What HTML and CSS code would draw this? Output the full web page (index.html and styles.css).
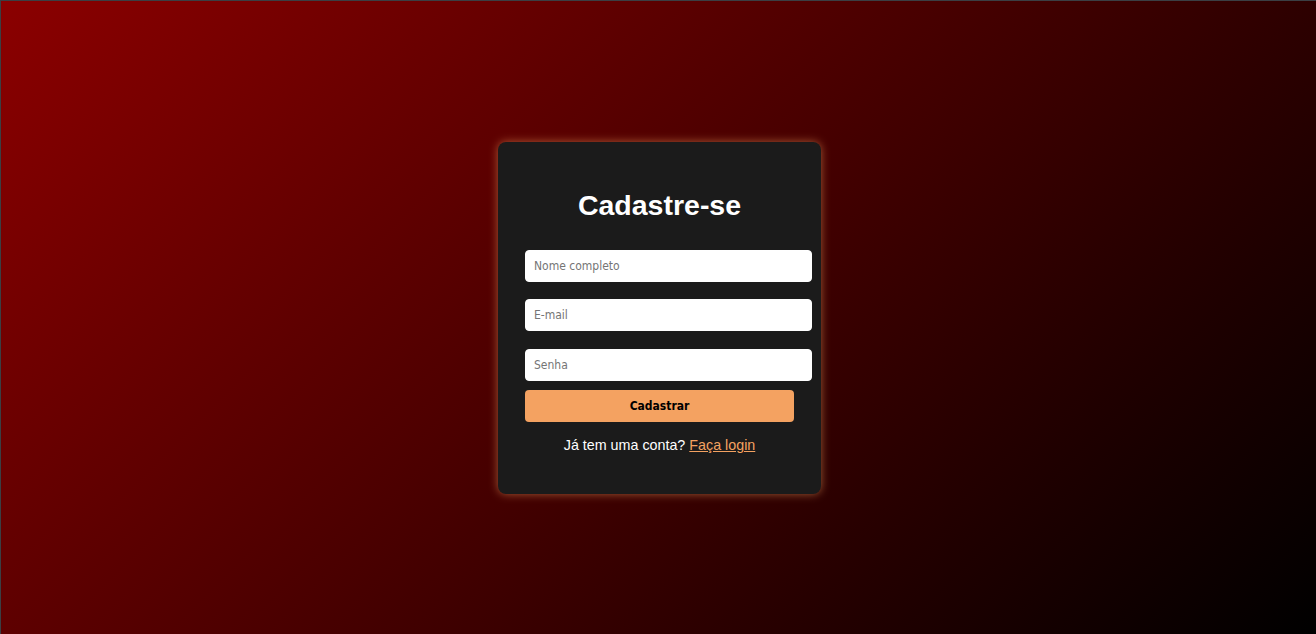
FILE: index.html
```html
<!DOCTYPE html>
<html lang="pt-BR">
<head>
<meta charset="utf-8">
<title>Cadastre-se</title>
<link rel="stylesheet" href="styles.css">
</head>
<body>
<main class="page">
  <div class="card">
    <h1 class="title">Cadastre-se</h1>
    <form class="form">
      <input class="field field-first" type="text" placeholder="Nome completo">
      <input class="field field-second" type="email" placeholder="E-mail">
      <input class="field field-third" type="password" placeholder="Senha">
      <button class="btn" type="button">Cadastrar</button>
    </form>
    <p class="footer">Já tem uma conta? <a class="link" href="#">Faça login</a></p>
  </div>
</main>
</body>
</html>
```

FILE: styles.css
```css
html, body {
  margin: 0;
  padding: 0;
  height: 100%;
}
body {
  box-sizing: border-box;
  border-top: 1px solid #3b3f44;
  border-left: 1px solid #3b3f44;
  background: linear-gradient(135deg, #8b0000, #000000);
  font-family: "Liberation Sans", Arial, sans-serif;
  overflow: hidden;
}
.page {
  height: 100%;
  display: flex;
  align-items: center;
  justify-content: center;
  padding-left: 2px;
  box-sizing: border-box;
}
.card {
  box-sizing: border-box;
  width: 323px;
  height: 352px;
  background: #1b1b1b;
  border-radius: 8px;
  padding: 27px;
  box-shadow: 0 0 10px rgba(244, 164, 96, 0.55);
  display: flex;
  flex-direction: column;
}
.title {
  margin: 20px 0 0;
  color: #ffffff;
  font-size: 28.5px;
  line-height: 32px;
  font-weight: bold;
  text-align: center;
}
.form {
  display: flex;
  flex-direction: column;
  margin-top: 29px;
}
.field {
  width: 100%;
  box-sizing: content-box;
  height: 14px;
  padding: 8px;
  border: 1px solid #ffffff;
  border-radius: 4px;
  background: #ffffff;
  font-family: "DejaVu Sans Condensed", "DejaVu Sans", sans-serif;
  font-size: 12px;
  color: #222;
  outline: none;
}
.field::placeholder {
  color: #757575;
}
.field-second {
  margin-top: 17px;
}
.field-third {
  margin-top: 18px;
}
.btn {
  margin-top: 9px;
  width: 100%;
  height: 32px;
  border: none;
  border-radius: 4px;
  background: #f4a261;
  color: #000000;
  font-family: "DejaVu Sans Condensed", "DejaVu Sans", sans-serif;
  font-weight: bold;
  font-size: 12px;
  cursor: pointer;
}
.footer {
  margin: 15px 0 0;
  color: #ffffff;
  font-size: 14.3px;
  line-height: 16px;
  text-align: center;
}
.link {
  color: #f4a261;
  text-decoration: underline;
}
```
